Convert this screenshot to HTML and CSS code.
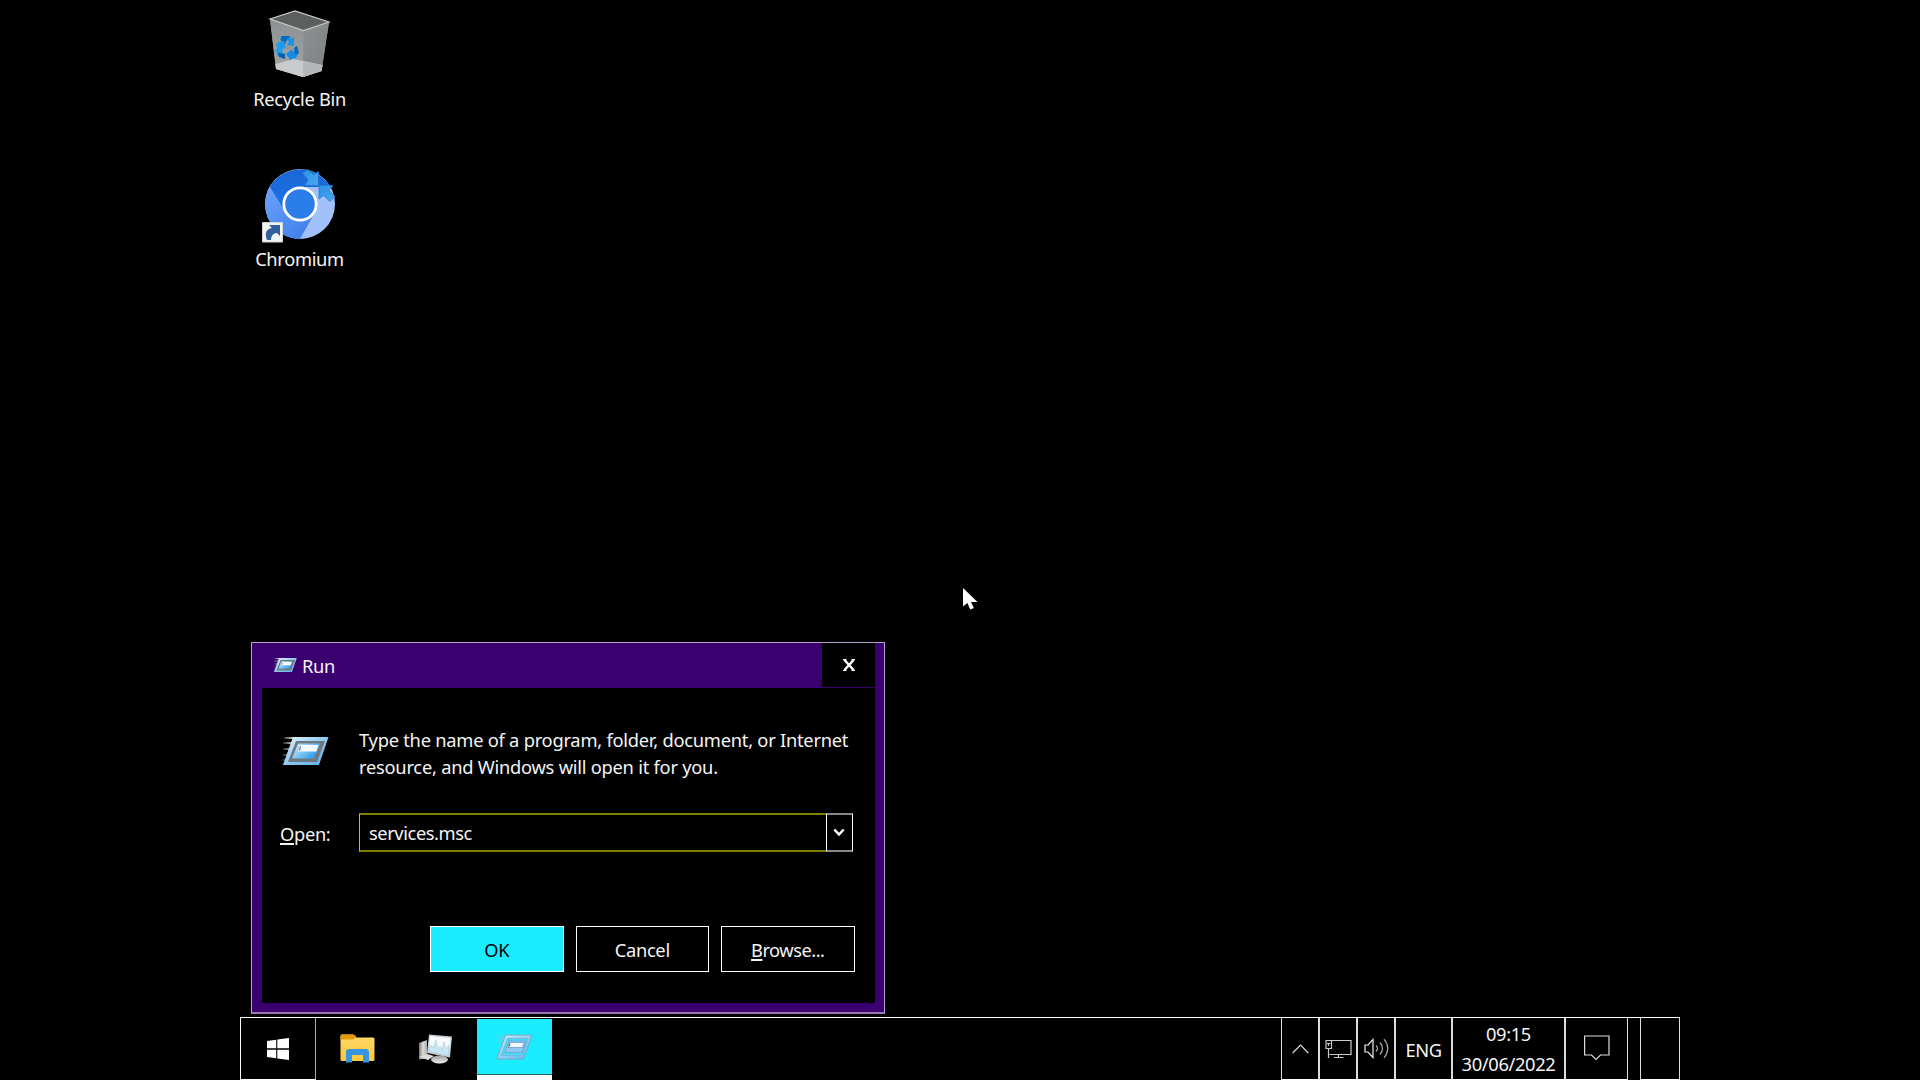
FILE: index.html
```html
<!DOCTYPE html>
<html lang="en">
<head>
<meta charset="utf-8">
<title>Run</title>
<link rel="stylesheet" href="styles.css">
</head>
<body>
<main class="desktop">
  <div class="shortcut bin">
    <svg class="shortcut-icon" width="72" height="84" viewBox="0 0 72 84">
      <defs>
        <linearGradient id="binL" x1="0" y1="0" x2="0" y2="1"><stop offset="0" stop-color="#8d9191"/><stop offset="1" stop-color="#a3a5a6"/></linearGradient>
        <linearGradient id="binR" x1="0" y1="0" x2="1" y2="1"><stop offset="0" stop-color="#8b8f90"/><stop offset="1" stop-color="#7d8284"/></linearGradient>
      </defs>
      <path d="M6 19 31 11 65 22 57.500 71 39 77 12 69Z" fill="#999"/>
      <path d="M6 19 39.500 31 39 77 12 69Z" fill="url(#binL)"/>
      <path d="M39.500 31 65 22 57.500 71 39 77Z" fill="url(#binR)"/>
      <path d="M12 69 11.500 64 29 59 58.500 65 57.500 71 39 77Z" fill="#c9cbcd"/>
      <path d="M39 62 58.500 65 57.500 71 39 77Z" fill="#b5b8ba"/>
      <path d="M6 19 31 11 65 22 39.500 30.500Z" fill="#5d5e5e" stroke="#c6c8c9" stroke-width="1.200"/>
      <path d="M17 36 25 36 28 39 30 37 30 46 23 45 25 42 23 40 20 44 16 40Z" fill="#1593e8"/>
      <path d="M17 36 25 36 22 39 20 44 16 40Z" fill="#0768bd" transform="translate(1 0)"/>
      <path d="M13 43 20 41 22 49 19 48 18 52 21 54 20 58 13 55 12 50 14 47 12 46Z" fill="#1b9bee"/>
      <path d="M14 53 21 54 21 59 15 57Z" fill="#0a5eb2"/>
      <path d="M22 54 28 49 28 51 31 51 30 48 33 46 34 54 32 58 27 59 27 61Z" fill="#168de2"/>
      <path d="M30 48 33 46 35 53 31 55Z" fill="#0868bd"/>
    </svg>
    <span class="label snug">Recycle Bin</span>
  </div>
  <div class="shortcut chromium">
    <svg class="shortcut-icon" width="84" height="84" viewBox="0 0 84 84">
      <defs>
        <linearGradient id="cTop" x1="0" y1="0" x2="0" y2="1"><stop offset="0" stop-color="#1a66d6"/><stop offset="1" stop-color="#1b74ea"/></linearGradient>
        <linearGradient id="cLeft" x1="0" y1="0" x2="1" y2="1"><stop offset="0" stop-color="#6ba1fb"/><stop offset="1" stop-color="#3a7ce9"/></linearGradient>
        <linearGradient id="cArrow" x1="0" y1="0" x2="1" y2="1"><stop offset="0" stop-color="#2d92e4"/><stop offset="1" stop-color="#48a7f0"/></linearGradient>
      </defs>
      <circle cx="47" cy="44" r="35" fill="#a2c1fb"/>
      <path d="M47 27H77.300A35 35 0 0 0 16.700 27L32.500 53 47 44Z" fill="url(#cTop)"/>
      <path d="M16.700 27A35 35 0 0 0 47 79L62 52.500 47 44 32 53Z" fill="url(#cLeft)"/>
      <circle cx="47" cy="44" r="16.200" fill="#2b7de9" stroke="#fff" stroke-width="2.800"/>
      <path d="M50 14 49 13 55 9.500 60.500 14.500 65.500 11.500V25.500H51.500L55 20Z" fill="url(#cArrow)" stroke="#1b70c4" stroke-width=".7"/>
      <path d="M66 25.500H80L76 30 82 36.500 77 41.500 70.500 35.500 66 39Z" fill="url(#cArrow)" stroke="#2077cb" stroke-width=".7"/>
      <path d="M9.500 62.500H29.500V82H9.500Z" fill="#f1f3f5" stroke="#cfd3d6"/>
      <path d="M14 80C11 72 14 69 19 68L16 65H27V76L24 73C20 73 18 76 18 80Z" fill="#315f9c"/>
    </svg>
    <span class="label snug">Chromium</span>
  </div>

  <section class="dialog">
    <header class="titlebar">
      <svg class="title-icon" width="24" height="16" viewBox="0 0 48 30"><use href="#run"/></svg>
      <span class="title snug">Run</span>
      <button class="close"><svg width="12" height="12" viewBox="0 0 12 12"><path d="M1.500 1 10.500 11M10.500 1 1.500 11" stroke="#fff" stroke-width="2.500"/><path d="M0 .7H3.500M8.500 .7H12M0 11.300H3.500M8.500 11.300H12" stroke="#fff" stroke-width="1.200"/></svg></button>
    </header>
    <div class="client">
      <div class="intro">
        <svg class="intro-icon" width="48" height="30" viewBox="0 0 48 30">
          <defs>
            <linearGradient id="rOut" x1="0" y1="0" x2="1" y2="1"><stop offset="0" stop-color="#eef6fb"/><stop offset=".5" stop-color="#8fc9f3"/><stop offset="1" stop-color="#55aeea"/></linearGradient>
            <linearGradient id="rIn" x1="0" y1="0" x2="1" y2=".6"><stop offset="0" stop-color="#dbeefb"/><stop offset=".6" stop-color="#70c0f4"/><stop offset="1" stop-color="#329be5"/></linearGradient>
            <linearGradient id="rTrail" x1="0" y1="0" x2="1" y2="0"><stop offset="0" stop-color="#fff" stop-opacity="0"/><stop offset="1" stop-color="#dfe8ee"/></linearGradient>
          </defs>
          <g id="run">
            <path d="M3 1H14V3H3ZM2 6H12V8H2ZM2 12H10V14H2ZM1 18H8V20H1ZM0 23H6V25H0ZM0 27H4V29H0Z" fill="url(#rTrail)"/>
            <path d="M12 1H47.500L38 29H2Z" fill="url(#rOut)"/>
            <path d="M15 5H44L36 26H7Z" fill="#6f7880"/>
            <path d="M17 7.500H39L33 22.500H11Z" fill="url(#rIn)"/>
            <path d="M19 9H37.500L35.500 15.500H17Z" fill="#f4f9fd"/>
            <path d="M19.500 10.500 18.500 14.500" stroke="#687884" stroke-width="1.200"/>
          </g>
        </svg>
        <p class="message">Type the name of a program, folder, document, or Internet<br>resource, and Windows will open it for you.</p>
      </div>
      <div class="field">
        <label class="open snug"><span class="key">O</span>pen:</label>
        <div class="combo">services.msc</div>
        <button class="drop"><svg width="12" height="9" viewBox="0 0 12 9"><path d="M1.300 1.500 6 6.500 10.700 1.500" fill="none" stroke="#fff" stroke-width="2.500"/></svg></button>
      </div>
      <div class="actions">
        <button class="btn primary">OK</button>
        <button class="btn">Cancel</button>
        <button class="btn"><span class="key">B</span>rowse...</button>
      </div>
    </div>
  </section>

  <svg class="cursor" width="18" height="26" viewBox="0 0 18 26"><path d="M1 1V19.500L5.300 16 8.300 22.500 11.800 21 9 15H15.500Z" fill="#fff"/></svg>

  <footer class="taskbar">
    <div class="start">
      <svg width="22" height="22" viewBox="0 0 22 22"><path d="M0 3 9.200 1.700V10.200H0ZM10.300 1.500 22 0V10.200H10.300ZM0 11.700H9.200V20.200L0 19ZM10.300 11.700H22V22L10.300 20.400Z" fill="#fff"/></svg>
    </div>
    <div class="app explorer">
      <svg width="35" height="29" viewBox="0 0 35 29">
        <defs><linearGradient id="fold" x1="0" y1="0" x2="0" y2="1"><stop offset="0" stop-color="#ffd96b"/><stop offset="1" stop-color="#fcc83c"/></linearGradient></defs>
        <path d="M.5 2Q.5 .5 2 .5H13L16 3.500H33Q34.500 3.500 34.500 5V25.500Q34.500 27 33 27H2Q.5 27 .5 25.500Z" fill="url(#fold)"/>
        <path d="M.5 2Q.5 .5 2 .5H13Q16 1 16 3L13 5.500H.5Z" fill="#e39b00"/>
        <path d="M6 28.500V18Q6 15 9 15H26Q29 15 29 18V28.500H23V21H12V28.500Z" fill="#3796e0"/>
      </svg>
    </div>
    <div class="app monitor">
      <svg width="35" height="30" viewBox="0 0 35 30">
        <defs><linearGradient id="tower" x1="0" y1="0" x2="1" y2="0"><stop offset="0" stop-color="#777"/><stop offset=".5" stop-color="#ddd"/><stop offset="1" stop-color="#aaa"/></linearGradient>
        <linearGradient id="foot" x1="0" y1="0" x2="0" y2="1"><stop offset="0" stop-color="#999"/><stop offset="1" stop-color="#f1f1f1"/></linearGradient></defs>
        <path d="M1 9 9 6V24L1 25.500Z" fill="url(#tower)"/><path d="M1 23 9 20 16 22 10 26Z" fill="#ddd"/>
        <ellipse cx="21.500" cy="25.500" rx="8.500" ry="4" fill="url(#foot)"/>
        <path d="M11 .5 34 2.500 32 23.500 9 19Z" fill="#c7cbce"/>
        <path d="M12 2 32.500 4 31 21.500 10.500 17.500Z" fill="#f7fafc"/>
        <path d="M11 14 13 11 15 14 18 6 20 15 22 12 24 16 26 8 28 15 31 11 31 21.500 10.500 17.500Z" fill="#c9e5f4" stroke="#a5cde0" stroke-width=".6"/>
      </svg>
    </div>
    <div class="app active">
      <svg width="37" height="26" viewBox="0 0 37 26">
        <defs><linearGradient id="runTask" x1="0" y1="0" x2="1" y2="1"><stop offset="0" stop-color="#c5eafa"/><stop offset="1" stop-color="#55b9ee"/></linearGradient></defs>
        <path d="M1 2H9M1 5H8M1 8H7" stroke="#79cbe6" stroke-width="1"/>
        <path d="M9.500 1H36L27.500 25H.8Z" fill="url(#runTask)" stroke="#82a9c2"/>
        <path d="M11.500 4.500H32L26 21.500H5.500Z" fill="#47dcf3" stroke="#73b9d9"/>
        <path d="M13 7H30L26 18.500H9Z" fill="#8dc6f2" stroke="#6aa5d8" stroke-width=".8"/>
        <path d="M13.500 8.500H28L26.500 13.500H12Z" fill="#f0f8ff" stroke="#6694bd" stroke-width=".7"/>
        <path d="M14 9.500 13.200 12.500" stroke="#555"/>
      </svg>
    </div>
    <div class="tray">
      <div class="cell chevron"><svg width="17" height="10" viewBox="0 0 17 10"><path d="M.7 9 8.500 1.200 16.300 9" fill="none" stroke="#ddd" stroke-width="1.200"/></svg></div>
      <div class="cell net"><svg width="27" height="20" viewBox="0 0 27 20"><path d="M7 1.500H26V15.500H4.500M13.500 15.500V18.500M9 18.500H18.500M3.500 10V19M1 1.500H6.500V9.500H1ZM3.500 4V7M2 4.500H5.500" fill="none" stroke="#ccc" stroke-width="1.200"/></svg></div>
      <div class="cell sound"><svg width="25" height="21" viewBox="0 0 25 21"><path d="M1 7H4L9 1.500V19.500L4 14H1Z" fill="none" stroke="#eee" stroke-width="1.200"/><path d="M12 7.500Q15 10.500 12 13.500M16 4.500Q21 10.500 16 16.500M20 1Q27.500 10.500 20 20" fill="none" stroke="#aaa" stroke-width="1.200"/></svg></div>
      <div class="cell lang">ENG</div>
      <div class="cell clock"><span>09:15</span><span>30/06/2022</span></div>
      <div class="cell notes"><svg width="26" height="26" viewBox="0 0 26 26"><path d="M.6 1H25V20H16.500L12 24.500 7.500 20H.6Z" fill="none" stroke="#ddd" stroke-width="1.200"/></svg></div>
      <div class="cell peek"></div>
    </div>
  </footer>
</main>
</body>
</html>
```
FILE: styles.css
```css
* { box-sizing: border-box; }
body { margin: 0; background: #000; color: #f4f4f4; font-family: "Noto Sans", "Open Sans", sans-serif; font-size: 18.3px; line-height: 27px; overflow: hidden; }
button { font: inherit; color: inherit; background: #000; padding: 0; border: 0; }
svg { display: block; flex: none; }
span { white-space: nowrap; }
.desktop { position: relative; width: 1440px; height: 1080px; margin: 0 auto; }
.shortcut { position: absolute; left: 0; width: 120px; display: flex; flex-direction: column; align-items: center; }
.bin { top: 0; }
.chromium { top: 160px; }
.bin .shortcut-icon { margin-left: -1px; }
.chromium .shortcut-icon { margin-right: 11px; }
.snug { letter-spacing: -.32px; }
.label { margin-top: 1px; margin-right: 1px; }

.dialog { position: absolute; left: 11px; top: 642px; width: 634px; height: 372px; background: #3a006f; border: 1px solid #b8a4cb; border-bottom: 2px solid #9678b0; padding: 0 9px 9px 10px; display: flex; flex-direction: column; }
.titlebar { height: 45px; flex: none; display: flex; align-items: center; padding: 0 0 1px 11px; }
.title { margin-left: 5px; }
.close { align-self: stretch; width: 53px; margin-left: auto; display: grid; place-items: center; }
.client { flex: 1; background: #000; padding: 43px 0 0 18px; display: flex; flex-direction: column; }
.intro { display: flex; height: 82px; }
.intro-icon { margin: 5px 30px 0 1px; }
.message { margin: -5px 0 0; letter-spacing: -.24px; white-space: nowrap; }
.field { display: flex; height: 39px; }
.open { width: 79px; padding-top: 7px; }
.combo { width: 467px; border: 2px solid #808000; border-left: 1px solid #c8c800; border-right: 0; padding: 4px 9px; letter-spacing: -.42px; }
.drop { width: 27px; border: 1px solid #fff; border-top: 2px solid #888; border-bottom: 2px solid #888; display: grid; place-items: center; padding-right: 1px; }
.key { text-decoration: underline; text-decoration-thickness: 1.5px; text-underline-offset: 2px; }
.actions { display: flex; gap: 12px; margin: 74px 0 0 150px; }
.btn { width: 133.5px; height: 46px; border: 1px solid #fff; letter-spacing: -.3px; }
.btn:last-child { letter-spacing: -.5px; }
.primary { background: #1aebff; color: #000; }

.cursor { position: absolute; left: 722px; top: 587px; }

.taskbar { position: absolute; left: 0; right: 0; top: 1017px; height: 63px; border-top: 1px solid #fff; border-left: 1px solid #fff; display: flex; background: #000; }
.start { width: 75px; border-right: 1px solid #aaa; border-bottom: 1px solid #fff; display: grid; place-items: center; }
.app { width: 75px; margin-right: 3px; display: grid; place-items: center; padding-bottom: 1px; }
.explorer { margin-left: 4px; }
.monitor { margin-right: 4px; }
.active { background: #1aebff; margin-top: 1px; border-bottom: 5px solid #fff; box-shadow: inset 0 -1px #286068; padding: 0; }
.tray { margin-left: auto; display: flex; }
.cell { border: 1px solid #ddd; border-top: 0; border-bottom-color: #fff; display: grid; place-content: center; justify-items: center; }
.chevron { width: 38px; }
.net, .sound { width: 38px; }
.lang { width: 57px; letter-spacing: -.4px; padding-top: 1px; }
.clock { width: 113px; line-height: 30px; letter-spacing: -.35px; }
.notes { width: 63px; padding-bottom: 1px; }
.peek { width: 40px; margin-left: 12px; }
```
